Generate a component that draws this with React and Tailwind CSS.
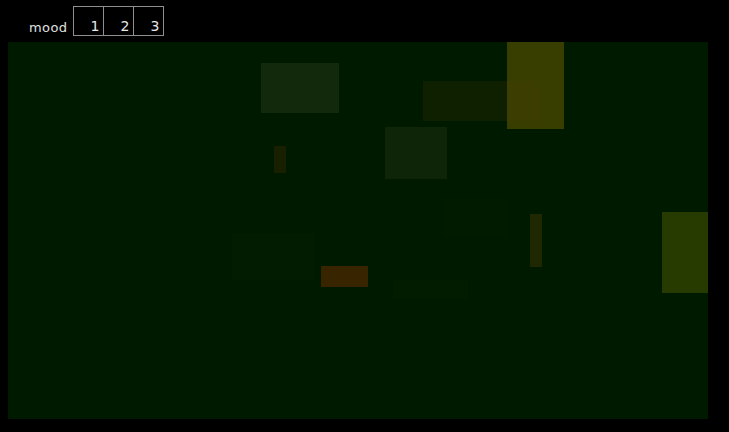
import React from "react";

const rects = [
  { x: 224, y: 191, w: 83, h: 47, c: "#011c00" },
  { x: 385, y: 238, w: 75, h: 19, c: "#021c00" },
  { x: 435, y: 156, w: 64, h: 40, c: "#011b00" },
  { x: 253, y: 21, w: 78, h: 50, c: "#122a0b" },
  { x: 415, y: 39, w: 117, h: 40, c: "#0f2000" },
  { x: 499, y: 0, w: 57, h: 87, c: "rgba(70,70,0,0.8)" },
  { x: 377, y: 85, w: 62, h: 52, c: "#0e2508" },
  { x: 266, y: 104, w: 12, h: 27, c: "#182000" },
  { x: 313, y: 224, w: 47, h: 21, c: "#392400" },
  { x: 522, y: 172, w: 12, h: 53, c: "#1f2800" },
  { x: 654, y: 170, w: 46, h: 81, c: "#273a00" },
];

export default function App() {
  return (
    <div className="w-[729px] h-[432px] bg-black overflow-hidden" style={{ fontFamily: '"DejaVu Sans", sans-serif' }}>
      <div className="h-[42px] flex items-start pl-[29px] pt-[6px]">
        <span className="text-[13px] text-[#e0e0e0] mt-[14px] leading-[16px] tracking-[0.4px]">mood</span>
        <div className="flex ml-[6px]">
          {["1", "2", "3"].map((n, i) => (
            <div
              key={n}
              className={`w-[30px] h-[30px] border-t border-b border-l border-[#8f8f8f] flex items-end justify-end pr-[4px] pb-[2px] text-[14px] leading-[14px] text-[#e8e8e8] ${i === 2 ? "border-r w-[31px]" : ""}`}
            >
              {n}
            </div>
          ))}
        </div>
      </div>
      <div className="ml-[8px] w-[700px] h-[377px] bg-[#001a00] relative overflow-hidden">
        {rects.map((r, i) => (
          <div
            key={i}
            className="absolute"
            style={{ left: r.x, top: r.y, width: r.w, height: r.h, background: r.c }}
          />
        ))}
      </div>
    </div>
  );
}
